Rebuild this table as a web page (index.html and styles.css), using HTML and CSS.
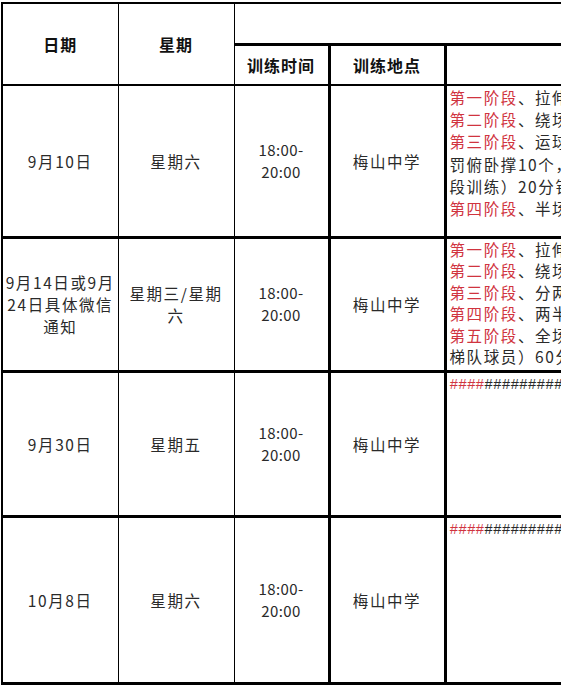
FILE: index.html
```html
<!DOCTYPE html>
<html lang="zh">
<head>
<meta charset="utf-8">
<link rel="stylesheet" href="styles.css">
</head>
<body>
<div class="sheet">
<table class="schedule">
  <colgroup>
    <col class="c-date"><col class="c-week"><col class="c-time"><col class="c-place"><col class="c-content">
  </colgroup>
  <tr class="h1">
    <th rowspan="2" class="hd b-thin-r">日期</th>
    <th rowspan="2" class="hd b-thin-r">星期</th>
    <th colspan="3" class="top-empty"></th>
  </tr>
  <tr class="h2">
    <th class="hd thick-r">训练时间</th>
    <th class="hd thick-r">训练地点</th>
    <th class="hd"></th>
  </tr>
  <tr class="r1">
    <td class="b-thin-r">9月10日</td>
    <td class="b-thin-r">星期六</td>
    <td class="time thick-r">18:00-<br>20:00</td>
    <td class="thick-r">梅山中学</td>
    <td class="content">
      <div class="ln"><span class="red">第一阶段</span>、拉伸热身活动</div>
      <div class="ln"><span class="red">第二阶段</span>、绕场慢跑</div>
      <div class="ln"><span class="red">第三阶段</span>、运球接力比赛</div>
      <div class="ln">罚俯卧撑10个，</div>
      <div class="ln">段训练）20分钟</div>
      <div class="ln"><span class="red">第四阶段</span>、半场对抗</div>
    </td>
  </tr>
  <tr class="r2">
    <td class="b-thin-r">9月14日或9月<br>24日具体微信<br>通知</td>
    <td class="b-thin-r">星期三/星期<br>六</td>
    <td class="time thick-r">18:00-<br>20:00</td>
    <td class="thick-r">梅山中学</td>
    <td class="content">
      <div class="ln"><span class="red">第一阶段</span>、拉伸热身活动</div>
      <div class="ln"><span class="red">第二阶段</span>、绕场慢跑</div>
      <div class="ln"><span class="red">第三阶段</span>、分两组练习</div>
      <div class="ln"><span class="red">第四阶段</span>、两半场对抗</div>
      <div class="ln"><span class="red">第五阶段</span>、全场比赛</div>
      <div class="ln">梯队球员）60分钟</div>
    </td>
  </tr>
  <tr class="r3">
    <td class="b-thin-r">9月30日</td>
    <td class="b-thin-r">星期五</td>
    <td class="time thick-r">18:00-<br>20:00</td>
    <td class="thick-r">梅山中学</td>
    <td class="content">
      <div class="ln hash"><span class="red">####</span>##############</div>
    </td>
  </tr>
  <tr class="r4">
    <td class="b-thin-r">10月8日</td>
    <td class="b-thin-r">星期六</td>
    <td class="time thick-r">18:00-<br>20:00</td>
    <td class="thick-r">梅山中学</td>
    <td class="content">
      <div class="ln hash"><span class="red">####</span>##############</div>
    </td>
  </tr>
</table>
</div>
</body>
</html>
```

FILE: styles.css
```css
html, body {
  margin: 0;
  padding: 0;
  background: #ffffff;
}
body {
  font-family: "Noto Sans CJK SC", "Noto Sans", sans-serif;
  color: #2a2a2a;
  overflow: hidden;
  width: 561px;
  height: 685px;
}
.sheet {
  width: 561px;
  height: 685px;
  overflow: hidden;
  padding: 2px 0 0 1px;
  box-sizing: border-box;
}
.schedule {
  border-collapse: collapse;
  table-layout: fixed;
  width: 760px;
  border-top: 2px solid #000;
  border-left: 2px solid #000;
}
.c-date { width: 116px; }
.c-week { width: 116px; }
.c-time { width: 95px; }
.c-place { width: 116px; }
.c-content { width: 317px; }

.schedule th,
.schedule td {
  padding: 0;
  text-align: center;
  vertical-align: middle;
  font-size: 15.5px;
  font-weight: 400;
  letter-spacing: 1.6px;
  line-height: 22px;
  white-space: nowrap;
  overflow: hidden;
  border-bottom: 2px solid #000;
}
.schedule .hd {
  font-weight: 700;
  font-size: 16px;
  letter-spacing: 1px;
  color: #111;
}
.b-thin-r { border-right: 1px solid #000; }
.thick-r { border-right: 3px solid #000; }
.top-empty { border-bottom: 3px solid #000 !important; }

.h1 { height: 41px; }
.h2 { height: 41px; }
.r1 { height: 152px; }
.r2 { height: 134px; }
.r3 { height: 145px; }
.r4 { height: 167px; }

.schedule tr.r1 td,
.schedule tr.r2 td,
.schedule tr.r3 td,
.schedule tr.r4 td {
  border-bottom: 3px solid #000;
}

.schedule td.time {
  font-size: 15px;
  letter-spacing: 0.4px;
}
.schedule td.content {
  text-align: left;
  vertical-align: top;
  padding: 0 0 0 3px;
}
.ln {
  line-height: 22.2px;
  white-space: nowrap;
}
.r2 .ln {
  line-height: 21.6px;
}
.hash {
  font-family: "Liberation Mono", "DejaVu Sans Mono", monospace;
  font-size: 14.5px;
  letter-spacing: 0;
  line-height: 18px;
  padding-top: 3px;
}
.red { color: #d0343f; }
```
